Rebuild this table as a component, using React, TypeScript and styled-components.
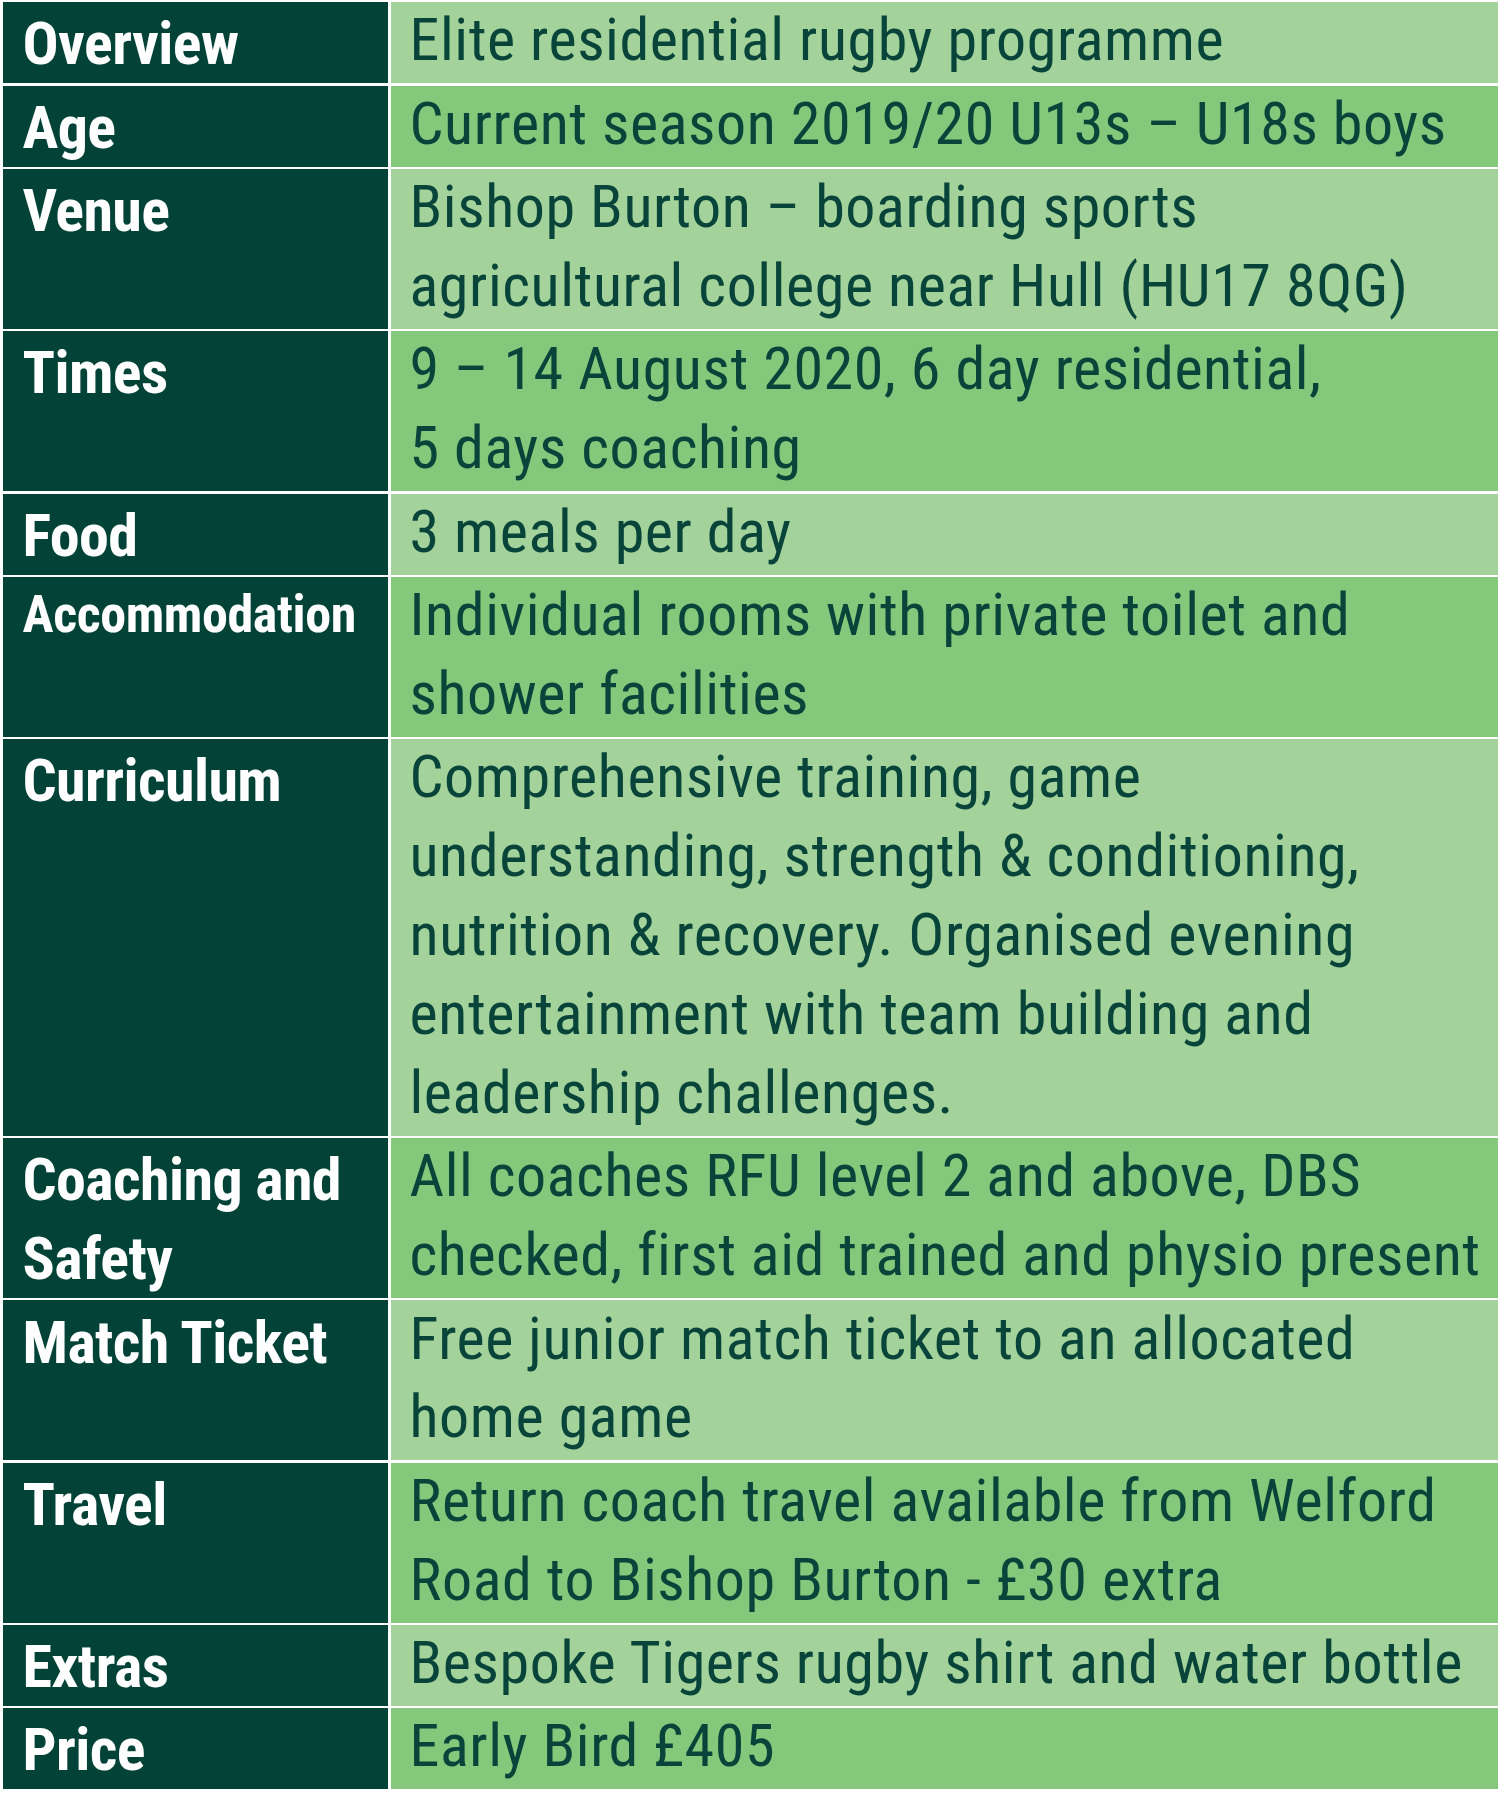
import styled, { createGlobalStyle } from 'styled-components';

type Row = {
  label: string[];
  text: string[];
  small?: boolean;
};

const rows: Row[] = [
  { label: ['Overview'], text: ['Elite residential rugby programme'] },
  { label: ['Age'], text: ['Current season 2019/20 U13s – U18s boys'] },
  {
    label: ['Venue'],
    text: ['Bishop Burton – boarding sports', 'agricultural college near Hull (HU17 8QG)'],
  },
  {
    label: ['Times'],
    text: ['9 – 14 August 2020, 6 day residential,', '5 days coaching'],
  },
  { label: ['Food'], text: ['3 meals per day'] },
  {
    label: ['Accommodation'],
    small: true,
    text: ['Individual rooms with private toilet and', 'shower facilities'],
  },
  {
    label: ['Curriculum'],
    text: [
      'Comprehensive training, game',
      'understanding, strength & conditioning,',
      'nutrition & recovery. Organised evening',
      'entertainment with team building and',
      'leadership challenges.',
    ],
  },
  {
    label: ['Coaching and', 'Safety'],
    text: ['All coaches RFU level 2 and above, DBS', 'checked, first aid trained and physio present'],
  },
  {
    label: ['Match Ticket'],
    text: ['Free junior match ticket to an allocated', 'home game'],
  },
  {
    label: ['Travel'],
    text: ['Return coach travel available from Welford', 'Road to Bishop Burton - £30 extra'],
  },
  { label: ['Extras'], text: ['Bespoke Tigers rugby shirt and water bottle'] },
  { label: ['Price'], text: ['Early Bird £405'] },
];

const GlobalStyle = createGlobalStyle`
  html, body {
    margin: 0;
    padding: 0;
    background: #ffffff;
  }
`;

const Table = styled.div`
  width: 1500px;
  box-sizing: border-box;
  display: grid;
  grid-template-columns: 385.5px 1fr;
  gap: 2.3px 2.5px;
  padding: 2.3px 2.5px;
  background: #ffffff;
`;

const Label = styled.div<{ $small?: boolean }>`
  background: #034237;
  color: #ffffff;
  padding: 1.1px 6px 1.1px 20px;
  font-family: 'Roboto Condensed', 'Open Sans', sans-serif;
  font-stretch: condensed;
  font-weight: 700;
  font-size: ${(p) => (p.$small ? '52px' : '60px')};
  letter-spacing: ${(p) => (p.$small ? '-0.4px' : '-0.6px')};
  line-height: 78.9px;
  white-space: nowrap;
  overflow: hidden;
`;

const Value = styled.div<{ $alt: boolean }>`
  background: ${(p) => (p.$alt ? '#85c87b' : '#a3d39a')};
  color: #08443a;
  padding: 1.1px 12px 1.1px 19px;
  font-family: 'Roboto Condensed', 'Roboto', sans-serif;
  font-size: 60px;
  letter-spacing: 0.6px;
  line-height: 78.9px;
  white-space: nowrap;
  overflow: hidden;
`;

/* small baseline nudge so the glyphs sit where the print layout has them */
const Lines = styled.div<{ $lift: number }>`
  transform: translateY(${(p) => -p.$lift}px);
`;

const Line = styled.div`
  height: 78.9px;
`;

export default function App() {
  return (
    <>
      <GlobalStyle />
      <Table>
        {rows.map((row, i) => [
          <Label key={`l${i}`} $small={row.small}>
            <Lines $lift={row.small ? 2.5 : -1.5}>
              {row.label.map((l) => (
                <Line key={l}>{l}</Line>
              ))}
            </Lines>
          </Label>,
          <Value key={`v${i}`} $alt={i % 2 === 1}>
            <Lines $lift={2}>
              {row.text.map((t) => (
                <Line key={t}>{t}</Line>
              ))}
            </Lines>
          </Value>,
        ])}
      </Table>
    </>
  );
}
